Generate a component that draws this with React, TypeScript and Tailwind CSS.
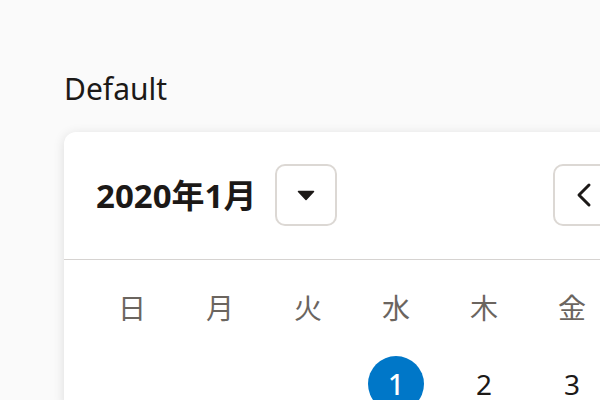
import { ChevronLeft, ChevronRight } from "lucide-react";

const weekdays = ["日", "月", "火", "水", "木", "金", "土"];
const firstWeek: (number | null)[] = [null, null, null, 1, 2, 3, 4];

export default function App() {
  return (
    <div
      className="h-[400px] w-[600px] overflow-hidden bg-[#fafafa] pl-16 pt-[69px]"
      style={{ fontFamily: '"Noto Sans", "Noto Sans CJK JP", sans-serif' }}
    >
      <div className="text-[30px] leading-[40px] text-[#1c1917]">Default</div>

      <div className="mt-[23px] w-[664px] shrink-0 rounded-xl bg-white shadow-[0_2px_12px_rgba(0,0,0,0.12)]">
        {/* Month header */}
        <div className="flex items-center border-b border-[#d6d3d1] px-8 pb-[33px] pt-8">
          <div className="text-[33px] font-bold leading-none text-[#1c1917]">2020年1月</div>
          <button className="ml-[19px] flex h-[62px] w-[62px] items-center justify-center rounded-[10px] border-2 border-[#dcd8d4] bg-white">
            <svg width="18" height="11" viewBox="0 0 18 11">
              <path d="M1.5 1.5h15L9 9.5z" fill="#1c1917" stroke="#1c1917" strokeWidth="1.5" strokeLinejoin="round" />
            </svg>
          </button>
          <div className="ml-auto flex gap-[19px]">
            <button className="flex h-[62px] w-[62px] items-center justify-center rounded-[10px] border-2 border-[#dcd8d4] bg-white">
              <ChevronLeft size={40} strokeWidth={1.8} className="text-[#1c1917]" />
            </button>
            <button className="flex h-[62px] w-[62px] items-center justify-center rounded-[10px] border-2 border-[#dcd8d4] bg-white">
              <ChevronRight size={40} strokeWidth={1.8} className="text-[#1c1917]" />
            </button>
          </div>
        </div>

        {/* Days */}
        <div className="px-6 pt-6">
          <div className="grid grid-cols-7">
            {weekdays.map((d) => (
              <div
                key={d}
                className="flex h-12 items-center justify-center text-[28px] text-[#6b655f]"
              >
                {d}
              </div>
            ))}
          </div>
          <div className="mt-6 grid grid-cols-7">
            {firstWeek.map((n, i) => (
              <div key={i} className="flex h-14 items-center justify-center">
                {n !== null &&
                  (n === 1 ? (
                    <span className="flex h-14 w-14 items-center justify-center rounded-full bg-[#0077c8] text-[28px] font-medium text-white">
                      {n}
                    </span>
                  ) : (
                    <span className="text-[28px] text-[#1c1917]">{n}</span>
                  ))}
              </div>
            ))}
          </div>
        </div>
      </div>
    </div>
  );
}
